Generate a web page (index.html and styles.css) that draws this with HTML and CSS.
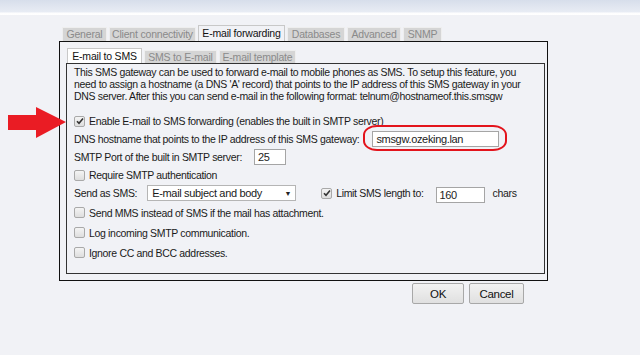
FILE: index.html
```html
<!DOCTYPE html>
<html lang="en">
<head>
    <meta charset="UTF-8">
    <title>E-mail forwarding</title>
    <link rel="stylesheet" href="styles.css">
</head>
<body>
    <div class="topbar"></div>

    <svg class="arrow" width="60" height="32" viewBox="0 0 60 32">
        <polygon points="0,8 28,8 28,0 58,15 28,31 28,23 0,23" fill="#ea1c24"/>
    </svg>

    <div class="dialog">
        <div class="tabs outer-tabs">
            <span class="tab">General</span>
            <span class="tab">Client connectivity</span>
            <span class="tab active">E-mail forwarding</span>
            <span class="tab">Databases</span>
            <span class="tab">Advanced</span>
            <span class="tab">SNMP</span>
        </div>
        <div class="panel outer-panel">
            <div class="tabs inner-tabs">
                <span class="tab active">E-mail to SMS</span>
                <span class="tab">SMS to E-mail</span>
                <span class="tab">E-mail template</span>
            </div>
            <div class="panel inner-panel">
                <p class="desc">This SMS gateway can be used to forward e-mail to mobile phones as SMS. To setup this feature, you<br>need to assign a hostname (a DNS 'A' record) that points to the IP address of this SMS gateway in your<br>DNS server. After this you can send e-mail in the following format: telnum@hostnameof.this.smsgw</p>

                <div class="row first">
                    <span class="cb checked"><svg width="8" height="8" viewBox="0 0 8 8"><path d="M1 4.2 L3 6.3 L7 1.5" fill="none" stroke="#333" stroke-width="1.6"/></svg></span>
                    <span>Enable E-mail to SMS forwarding (enables the built in SMTP server)</span>
                </div>
                <div class="row">
                    <span class="label-dns">DNS hostname that points to the IP address of this SMS gateway:</span>
                    <span class="highlight"><span class="field host">smsgw.ozeking.lan</span></span>
                </div>
                <div class="row">
                    <span class="label-port">SMTP Port of the built in SMTP server:</span>
                    <span class="field port">25</span>
                </div>
                <div class="row">
                    <span class="cb"></span>
                    <span>Require SMTP authentication</span>
                </div>
                <div class="row send">
                    <span class="label-send">Send as SMS:</span>
                    <span class="select">E-mail subject and body<span class="caret">&#9660;</span></span>
                    <span class="cb checked"><svg width="8" height="8" viewBox="0 0 8 8"><path d="M1 4.2 L3 6.3 L7 1.5" fill="none" stroke="#333" stroke-width="1.6"/></svg></span>
                    <span class="label-limit">Limit SMS length to:</span>
                    <span class="field limit">160</span>
                    <span>chars</span>
                </div>
                <div class="row spaced">
                    <span class="cb"></span>
                    <span>Send MMS instead of SMS if the mail has attachment.</span>
                </div>
                <div class="row spaced">
                    <span class="cb"></span>
                    <span>Log incoming SMTP communication.</span>
                </div>
                <div class="row spaced">
                    <span class="cb"></span>
                    <span>Ignore CC and BCC addresses.</span>
                </div>
            </div>
        </div>
        <div class="buttons">
            <span class="btn ok">OK</span>
            <span class="btn cancel">Cancel</span>
        </div>
    </div>
</body>
</html>
```

FILE: styles.css
```css
body {
    margin: 0;
    background: #f1f2f6;
    font-family: 'Liberation Sans', Arial, sans-serif;
    font-size: 10.5px;
    letter-spacing: -0.33px;
    color: #1a1a1a;
    position: relative;
    height: 355px;
    overflow: hidden;
    white-space: nowrap;
}

.topbar {
    height: 15px;
    background: linear-gradient(#d7deeb, #e8ecf4 80%, #fdfdfe 86%, #ffffff);
}

.arrow {
    position: absolute;
    left: 8px;
    top: 107px;
}

.dialog {
    margin: 11px 0 0 59px;
    width: 489px;
}

/* tab strips */
.tabs {
    display: flex;
    align-items: flex-end;
    height: 15px;
}

.outer-tabs {
    padding-left: 3px;
}

.tab {
    display: block;
    height: 13px;
    line-height: 13px;
    padding: 0 2px;
    margin-right: 2px;
    background: #d5d5d5;
    color: #8a8a8a;
    border: 1px solid #eeeeee;
    border-bottom: none;
    font-size: 10.5px;
    letter-spacing: -0.2px;
    text-align: center;
}

.tab.active {
    height: 15px;
    line-height: 15px;
    background: #f1f2f6;
    color: #111;
    border-color: #c8c8c8;
}

.outer-tabs .tab:nth-child(1) { width: 39px; }
.outer-tabs .tab:nth-child(2) { width: 81px; }
.outer-tabs .tab:nth-child(3) { width: 81px; }
.outer-tabs .tab:nth-child(4) { width: 52px; }
.outer-tabs .tab:nth-child(5) { width: 48px; }
.outer-tabs .tab:nth-child(6) { width: 33px; }

.panel {
    border: 1px solid #111;
}

.outer-panel {
    padding: 7px 2px 6px 6px;
}

.inner-tabs {
    height: 14px;
    padding-left: 1px;
}

.inner-tabs .tab {
    height: 12px;
    line-height: 12px;
}

.inner-tabs .tab.active {
    height: 14px;
    line-height: 14px;
    background: #ffffff;
}

.inner-tabs .tab:nth-child(1) { width: 69px; }
.inner-tabs .tab:nth-child(2) { width: 67px; }
.inner-tabs .tab:nth-child(3) { width: 71px; }

.inner-panel {
    height: 207px;
    padding: 2px 7px 0 7px;
    border-color: #333;
}

.desc {
    margin: 0;
    line-height: 12px;
}

.row {
    display: flex;
    align-items: center;
    height: 18px;
    gap: 4px;
}

.row.first {
    margin-top: 10px;
}

.row.spaced {
    height: 19px;
    margin-top: 1px;
}

.cb {
    display: inline-flex;
    align-items: center;
    justify-content: center;
    width: 9px;
    height: 9px;
    border: 1px solid #a9a9a9;
    border-radius: 2px;
    background: linear-gradient(#f4f4f4, #dedede);
}

.field {
    display: block;
    height: 14px;
    line-height: 14px;
    padding: 0 3px;
    background: #fff;
    border: 1px solid #a5a5a5;
    font-size: 11px;
    color: #222;
}

.label-dns {
    margin-right: 9px;
}

.highlight {
    position: relative;
    display: block;
}

.highlight::after {
    content: '';
    position: absolute;
    left: -9px;
    right: -8px;
    top: -6px;
    bottom: -4px;
    border: 2px solid #e3141c;
    border-radius: 14px / 10px;
}

.host {
    width: 119px;
}

.label-port {
    margin-right: 8px;
}

.port {
    width: 24px;
}

.label-send {
    margin-right: 6px;
}

.select {
    display: flex;
    justify-content: space-between;
    align-items: center;
    width: 139px;
    height: 14px;
    padding: 0 4px 0 4px;
    background: #fff;
    border: 1px solid #b5b5b5;
    font-size: 11px;
    margin-right: 21px;
}

.caret {
    font-size: 7px;
    color: #222;
}

.label-limit {
    margin-right: 8px;
}

.limit {
    width: 41px;
    margin-right: 4px;
    margin-top: 3px;
}

.buttons {
    display: flex;
    justify-content: flex-end;
    gap: 5px;
    padding: 2px 24px 0 0;
}

.btn {
    display: flex;
    align-items: center;
    justify-content: center;
    height: 19px;
    border: 1px solid #a8a8a8;
    border-radius: 2px;
    background: linear-gradient(#f2f2f2, #e0e0e0);
    font-size: 11.5px;
    color: #111;
}

.ok {
    width: 50px;
}

.cancel {
    width: 53px;
}
```
